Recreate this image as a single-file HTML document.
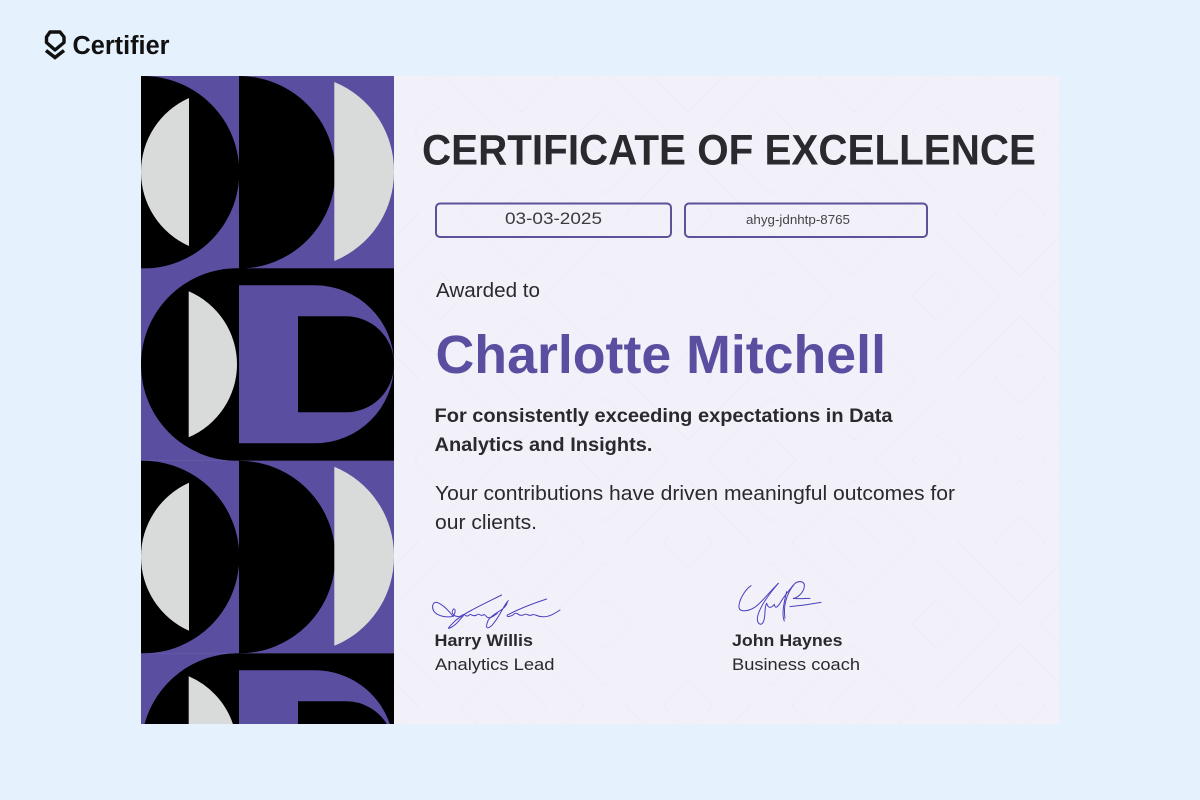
<!DOCTYPE html>
<html lang="en">
<head>
<meta charset="utf-8">
<title>Certificate of Excellence</title>
<style>
html,body{margin:0;padding:0;width:1200px;height:800px;overflow:hidden;background:#e6f1fe}
svg{display:block}
text{font-family:"Liberation Sans",Arial,sans-serif;fill:#2a292e}
.b{font-weight:700}
</style>
</head>
<body>
<svg xmlns="http://www.w3.org/2000/svg" width="1200" height="800" viewBox="0 0 1200 800">
<defs>
<clipPath id="cert"><rect x="394" y="76" width="665" height="648"/></clipPath>
<pattern id="dia" x="605" y="296" width="166" height="164" patternUnits="userSpaceOnUse">
  <g fill="none" stroke="#eeedf6" stroke-width="1.2" stroke-linejoin="round">
    <path d="M0-25L25 0L0 25L-25 0Z"/><path d="M166-25L191 0L166 25L141 0Z"/>
    <path d="M0 139L25 164L0 189L-25 164Z"/><path d="M166 139L191 164L166 189L141 164Z"/>
    <path d="M83 57L108 82L83 107L58 82Z"/>
    <path d="M0-62L62 0L0 62L-62 0Z"/><path d="M166-62L228 0L166 62L104 0Z"/>
    <path d="M0 102L62 164L0 226L-62 164Z"/><path d="M166 102L228 164L166 226L104 164Z"/>
    <path d="M83 20L145 82L83 144L21 82Z"/>
  </g>
</pattern>
<g id="r1">
  <rect x="141" y="0" width="253" height="192.6" fill="#5a4ea1"/>
  <path d="M141 0H143A96 96 0 0 1 143 192.600H141Z" fill="#000"/>
  <path d="M189 22V170A81 81 0 0 1 141 96A81 81 0 0 1 189 22Z" fill="#d9dbdb"/>
  <path d="M239 0A96.300 96.300 0 0 1 239 192.600Z" fill="#000"/>
  <path d="M334.300 6V185A96 96 0 0 0 394 96A96 96 0 0 0 334.300 6Z" fill="#d9dbdb"/>
</g>
<g id="r2">
  <rect x="141" y="0" width="98" height="192.600" fill="#5a4ea1"/>
  <path d="M239 0H237A96 96.300 0 0 0 141 96.300A96 96.300 0 0 0 237 192.600H239Z" fill="#000"/>
  <rect x="239" y="0" width="155" height="192.600" fill="#000"/>
  <path d="M188.700 23V169A79.500 79.500 0 0 0 237 96A79.500 79.500 0 0 0 188.700 23Z" fill="#d9dbdb"/>
  <path d="M239 17H315A79 79 0 0 1 315 175H239Z" fill="#5a4ea1"/>
  <path d="M298 48H346A48 48 0 0 1 346 144H298Z" fill="#000"/>
</g>
</defs>

<rect width="1200" height="800" fill="#e6f1fe"/>
<rect x="394" y="76" width="665" height="648" fill="#f2f1fa"/>
<rect x="394" y="76" width="665" height="648" fill="url(#dia)" clip-path="url(#cert)"/>

<use href="#r1" y="76"/>
<use href="#r2" y="268.300"/>
<use href="#r1" y="460.800"/>
<g transform="translate(0,653.300)">
  <rect x="141" y="0" width="98" height="70.700" fill="#5a4ea1"/>
  <rect x="239" y="0" width="155" height="70.700" fill="#000"/>
  <path d="M239 0H237A96 96.300 0 0 0 144.500 70.700H239Z" fill="#000"/>
  <path d="M188.700 23A79.500 79.500 0 0 1 232.900 70.700H188.700Z" fill="#d9dbdb"/>
  <path d="M239 17H315A79 79 0 0 1 389.800 70.700H239Z" fill="#5a4ea1"/>
  <path d="M298 48H346A48 48 0 0 1 386.800 70.700H298Z" fill="#000"/>
</g>

<!-- logo -->
<path d="M50 32H60L64 37V42.500L55 50L46.500 42.500V37Z" fill="none" stroke="#111" stroke-width="3.400" stroke-linejoin="round"/>
<path d="M46 50.500L55 57.500L64 50.500" fill="none" stroke="#111" stroke-width="3.600" stroke-linejoin="miter" stroke-linecap="butt"/>
<text x="72.500" y="54" font-size="25.500" class="b" textLength="97" lengthAdjust="spacingAndGlyphs" style="fill:#111">Certifier</text>

<!-- title -->
<text x="422" y="164.500" font-size="43" class="b" textLength="614" lengthAdjust="spacingAndGlyphs">CERTIFICATE OF EXCELLENCE</text>

<!-- fields -->
<rect x="436" y="203.500" width="235" height="33.500" rx="4" fill="none" stroke="#5d5299" stroke-width="2"/>
<rect x="685" y="203.500" width="242" height="33.500" rx="4" fill="none" stroke="#5d5299" stroke-width="2"/>
<text x="505" y="224" font-size="17" textLength="97" lengthAdjust="spacingAndGlyphs" style="fill:#3a3a40">03-03-2025</text>
<text x="746" y="224" font-size="13" textLength="104" lengthAdjust="spacingAndGlyphs" style="fill:#44444a">ahyg-jdnhtp-8765</text>

<!-- body -->
<text x="436" y="297" font-size="20" textLength="104" lengthAdjust="spacingAndGlyphs">Awarded to</text>
<text x="435.500" y="373" font-size="54" class="b" textLength="450.500" lengthAdjust="spacingAndGlyphs" style="fill:#5a4ea1">Charlotte Mitchell</text>
<text x="434.500" y="422" font-size="19.500" class="b" textLength="458" lengthAdjust="spacingAndGlyphs">For consistently exceeding expectations in Data</text>
<text x="434.500" y="451" font-size="19.500" class="b" textLength="218" lengthAdjust="spacingAndGlyphs">Analytics and Insights.</text>
<text x="435" y="500" font-size="20" textLength="520" lengthAdjust="spacingAndGlyphs">Your contributions have driven meaningful outcomes for</text>
<text x="435" y="529" font-size="20" textLength="102" lengthAdjust="spacingAndGlyphs">our clients.</text>

<!-- signatures -->
<g transform="translate(420 585) scale(.3333)" fill="none" stroke="#4a41bd" stroke-width="3" stroke-linecap="round" stroke-linejoin="round">
  <path d="M100 95C75 62 42 38 38 62C35 85 62 98 95 95C105 92 110 70 100 72C90 85 105 100 125 92"/>
  <path d="M245 30C195 55 130 85 105 108C95 118 85 128 85 130C100 128 115 110 130 92"/>
  <path d="M125 92C135 82 135 98 145 92C155 82 155 98 170 90C178 82 178 95 190 90C195 85 195 95 205 98C215 100 225 90 232 85"/>
  <path d="M265 47C252 58 240 95 215 122C200 135 195 128 205 105C215 90 235 82 250 70C255 65 262 60 262 50"/>
  <path d="M380 42C340 55 300 70 262 90C258 98 275 95 285 85C295 82 295 95 310 90C320 82 325 95 335 90C345 85 350 95 365 95C385 98 405 85 420 75"/>
</g>
<g transform="translate(725 575) scale(.3333)" fill="none" stroke="#4a41bd" stroke-width="3" stroke-linecap="round" stroke-linejoin="round">
  <path d="M78 32C58 45 40 80 42 98C45 112 70 110 92 95C110 82 125 60 160 25"/>
  <path d="M160 25C130 60 100 100 97 130C97 150 112 155 117 135C122 115 118 95 125 85C128 95 135 105 148 88C150 100 155 100 165 85C175 65 190 50 205 30"/>
  <path d="M185 50C175 90 170 120 178 138"/>
  <path d="M180 130C175 100 180 60 210 25C225 15 240 20 238 35C235 55 215 70 205 70"/>
  <path d="M205 70C225 72 240 70 255 70"/>
  <path d="M195 95C225 92 260 87 288 82"/>
</g>

<!-- signatories -->
<text x="434.500" y="646" font-size="17" class="b" textLength="98.500" lengthAdjust="spacingAndGlyphs">Harry Willis</text>
<text x="435" y="670" font-size="17" textLength="119.500" lengthAdjust="spacingAndGlyphs">Analytics Lead</text>
<text x="732" y="646" font-size="17" class="b" textLength="110.500" lengthAdjust="spacingAndGlyphs">John Haynes</text>
<text x="732" y="670" font-size="17" textLength="128" lengthAdjust="spacingAndGlyphs">Business coach</text>
</svg>
</body>
</html>
